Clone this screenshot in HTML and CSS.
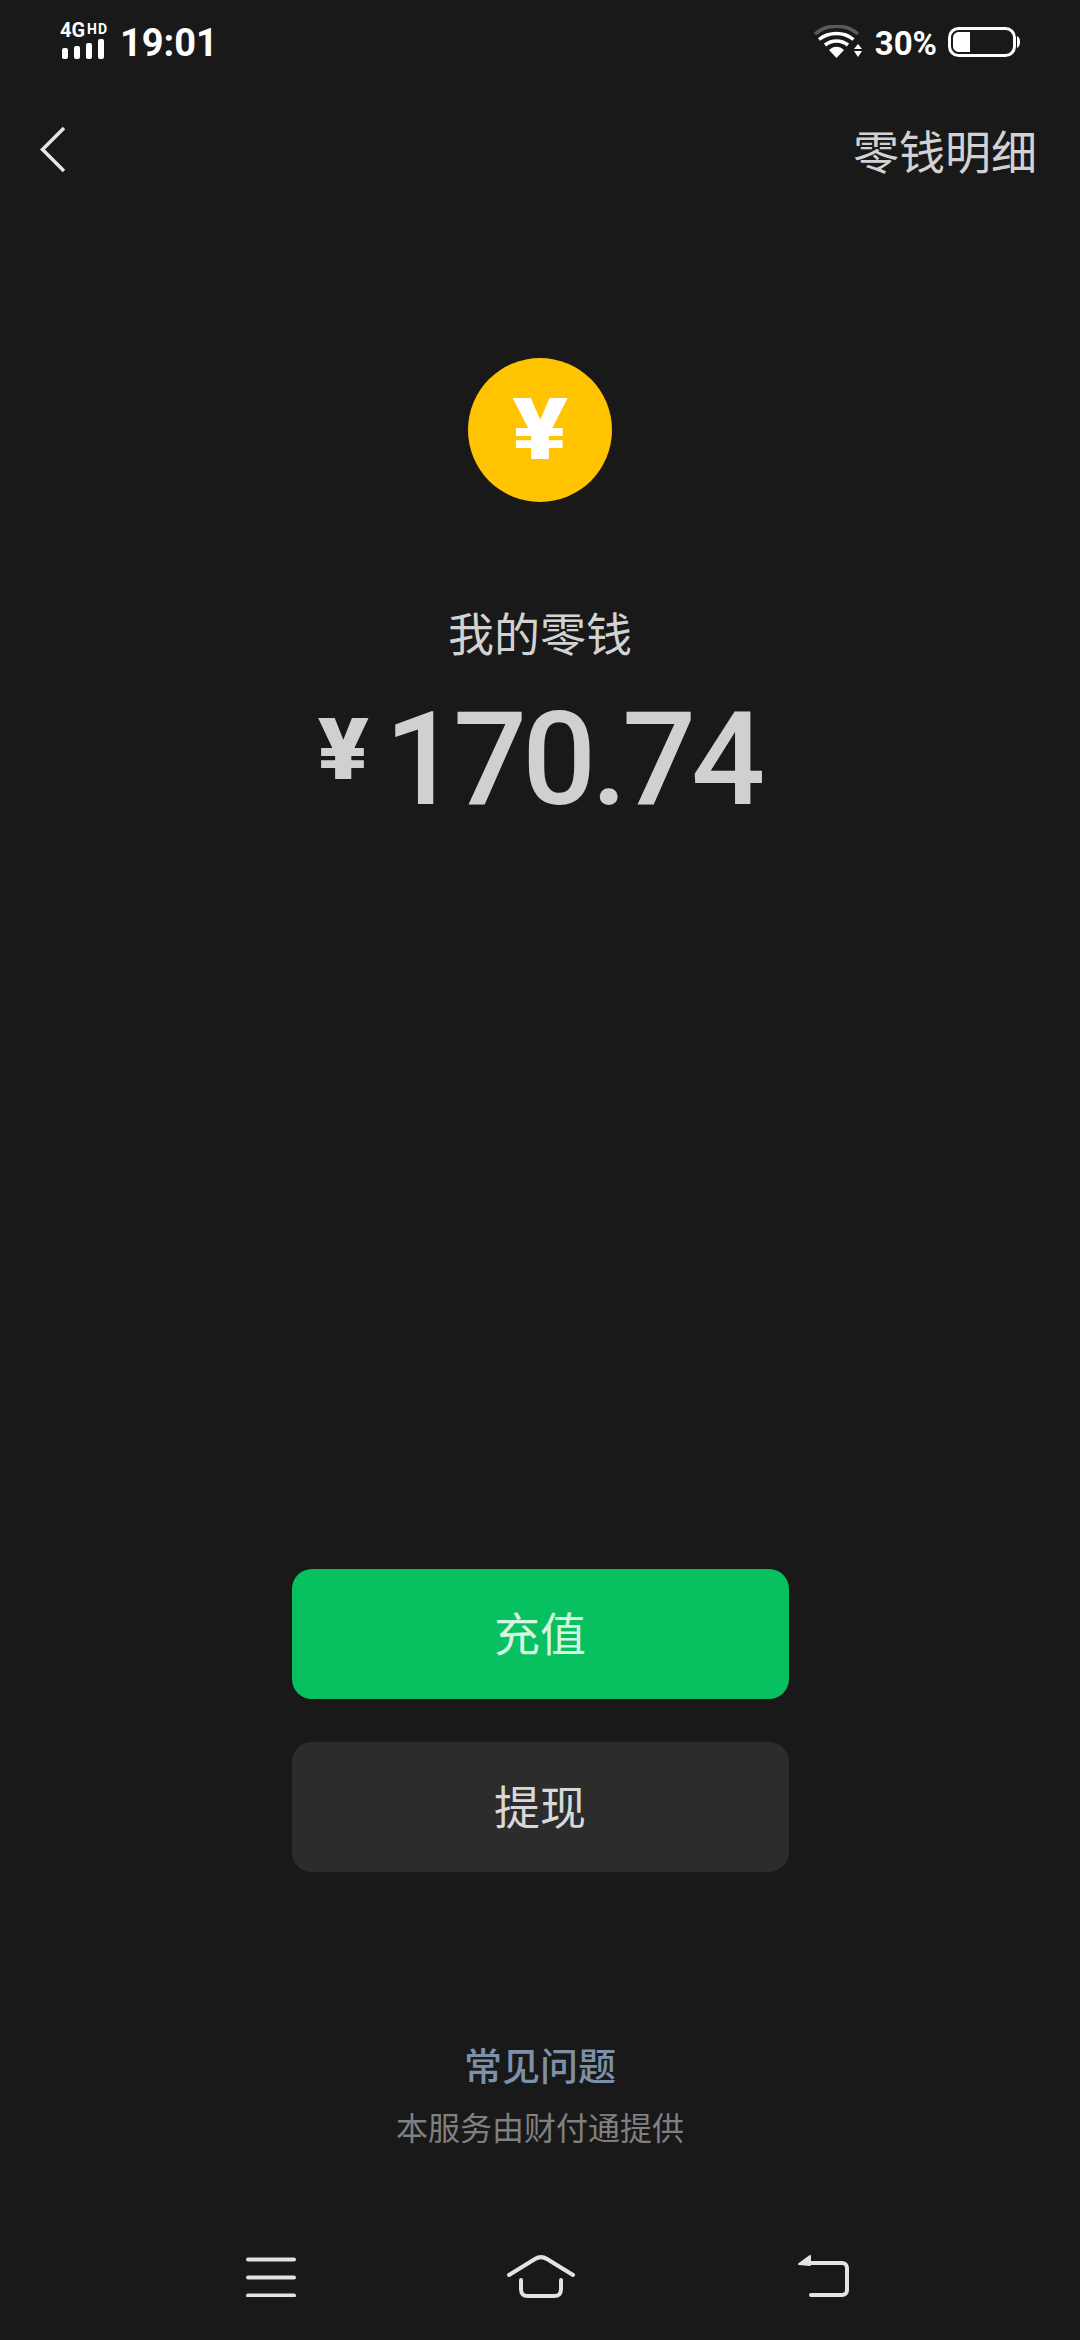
FILE: index.html
```html
<!DOCTYPE html>
<html lang="zh-CN">
<head>
    <meta charset="UTF-8">
    <meta name="viewport" content="width=device-width, initial-scale=1.0">
    <title>我的零钱</title>
    <link rel="stylesheet" href="styles.css">
</head>
<body>
    <div class="page">
        <div class="status-bar">
            <div class="status-left">
                <div class="network">
                    <div class="network-type"><span class="net-4g">4G</span><span class="net-hd">HD</span></div>
                    <div class="signal">
                        <i class="bar bar-1"></i>
                        <i class="bar bar-2"></i>
                        <i class="bar bar-3"></i>
                        <i class="bar bar-4"></i>
                    </div>
                </div>
                <span class="clock">19:01</span>
            </div>
            <div class="status-right">
                <svg class="wifi" width="49" height="34" viewBox="0 0 49 34" fill="none">
                    <path d="M2 9C14 -1.5 33 -1.5 45 9" stroke="#5a5a5a" stroke-width="3.5"/>
                    <path d="M6 14.500C16 6.500 31 6.500 40.500 14.500" stroke="#fff" stroke-width="3.500"/>
                    <path d="M12 20C19 14.500 28 14.500 35 20" stroke="#fff" stroke-width="3.500"/>
                    <path d="M16 25C20.500 20.500 26.500 20.500 31 25L23.500 33Z" fill="#fff"/>
                    <path d="M45 19L49 24H41ZM41 26H49L45 32Z" fill="#fff"/>
                </svg>
                <span class="battery-text">30%</span>
                <svg class="battery" width="72" height="30" viewBox="0 0 72 30" fill="none">
                    <rect x="1.500" y="1.500" width="65" height="27" rx="9" stroke="#fff" stroke-width="3"/>
                    <path d="M5 11C5 7.500 7.500 5 11 5H22V25H11C7.500 25 5 22.500 5 19Z" fill="#fff"/>
                    <path d="M69 9C71 10 72 12 72 15C72 18 71 20 69 21Z" fill="#fff"/>
                </svg>
            </div>
        </div>

        <div class="nav">
            <svg class="back" width="26" height="48" viewBox="0 0 26 48" fill="none">
                <path d="M24 2L2.500 23.500L24 45" stroke="#e6e6e6" stroke-width="3.500"/>
            </svg>
            <span class="nav-link">零钱明细</span>
        </div>

        <div class="wallet">
            <div class="coin"><span class="coin-sign">¥</span></div>
            <div class="wallet-label">我的零钱</div>
            <div class="amount"><span class="amount-sign">¥</span><span class="amount-value">170.74</span></div>
        </div>

        <div class="actions">
            <div class="btn btn-primary">充值</div>
            <div class="btn btn-dark">提现</div>
        </div>

        <div class="help">
            <div class="help-link">常见问题</div>
            <div class="help-note">本服务由财付通提供</div>
        </div>

        <div class="sys-nav">
            <svg width="50" height="40" viewBox="0 0 50 40" fill="none" stroke="#e3e3e3" stroke-width="4" stroke-linecap="round">
                <path d="M2 2.500H48M2 20.500H48M2 38.500H48"/>
            </svg>
            <svg class="sys-home" width="68" height="44" viewBox="0 0 68 44" fill="none" stroke="#e3e3e3" stroke-width="4" stroke-linecap="round" stroke-linejoin="round">
                <path d="M2 20L28 4C32 1.500 36 1.500 40 4L66 20"/>
                <path d="M14 25V34C14 39 16 41 21 41H47C52 41 54 39 54 34V25"/>
            </svg>
            <svg width="52" height="44" viewBox="0 0 52 44" fill="none" stroke="#e3e3e3" stroke-width="4" stroke-linecap="round" stroke-linejoin="round">
                <path d="M10 8H45C48 8 50 10 50 13V35C50 38 48 40 45 40H14"/>
                <path d="M2 9L13 1V10Z" fill="#e3e3e3" stroke-width="2"/>
            </svg>
        </div>
    </div>
</body>
</html>
```

FILE: styles.css
```css
* {
  box-sizing: border-box;
}

body {
  margin: 0;
  background-color: #191919;
  font-family: Roboto, "Noto Sans CJK SC", sans-serif;
}

.page {
  display: flex;
  flex-direction: column;
  width: 1080px;
  height: 2340px;
  overflow: hidden;
}

/* status bar */
.status-bar {
  display: flex;
  justify-content: space-between;
  align-items: center;
  height: 86px;
  padding: 0 60px 0 60px;
  color: #fff;
}

.status-left,
.status-right {
  display: flex;
  align-items: center;
}

.network {
  display: flex;
  flex-direction: column;
  width: 48px;
  margin-top: -4px;
}

.network-type {
  display: flex;
  align-items: flex-start;
  height: 15px;
  font-weight: 700;
  line-height: 15px;
}

.net-4g {
  font-size: 20px;
}

.net-hd {
  margin-left: 2px;
  font-size: 14px;
  line-height: 12px;
  letter-spacing: 1px;
}

.signal {
  display: flex;
  align-items: flex-end;
  gap: 6px;
  height: 20px;
  margin-top: 1px;
  padding-left: 2px;
}

.bar {
  width: 6px;
  border-radius: 2px;
  background-color: #fff;
}

.bar-1 { height: 11px; }
.bar-2 { height: 13px; }
.bar-3 { height: 16px; }
.bar-4 { height: 20px; }

.clock {
  margin-left: 12px;
  font-size: 38px;
  font-weight: 700;
}

.wifi,
.battery {
  margin-top: -2px;
}

.battery-text {
  margin-left: 13px;
  font-size: 33px;
  font-weight: 700;
}

.battery {
  margin-left: 11px;
}

/* top nav */
.nav {
  display: flex;
  justify-content: space-between;
  align-items: center;
  height: 128px;
  padding: 0 43px 0 40px;
}

.nav-link {
  margin-top: -3px;
  font-size: 46px;
  color: #d2d2d2;
}

/* balance */
.wallet {
  display: flex;
  flex-direction: column;
  align-items: center;
  margin-top: 144px;
}

.coin {
  width: 144px;
  height: 144px;
  border-radius: 50%;
  background-color: #ffc300;
  color: #fff;
  font-size: 86px;
  font-weight: 900;
  line-height: 144px;
  text-align: center;
}

.coin-sign {
  display: inline-block;
  transform: scaleX(1.2);
}

.wallet-label {
  margin-top: 103px;
  font-size: 46px;
  line-height: 60px;
  color: #d2d2d2;
}

.amount {
  display: flex;
  align-items: flex-start;
  margin-top: 25px;
  color: #d0d0d0;
  font-weight: 500;
}

.amount-sign {
  margin-top: 5px;
  font-size: 86px;
  font-weight: 900;
  line-height: 110px;
  transform: scaleX(1.1);
}

.amount-value {
  margin-left: 18px;
  font-size: 130px;
  line-height: 140px;
  letter-spacing: -5px;
}

/* buttons */
.actions {
  display: flex;
  flex-direction: column;
  align-items: center;
  gap: 43px;
  margin-top: 739px;
}

.btn {
  width: 497px;
  height: 130px;
  border-radius: 20px;
  font-size: 46px;
  line-height: 133px;
  text-align: center;
}

.btn-primary {
  background-color: #07c160;
  color: #d6f5e3;
}

.btn-dark {
  background-color: #2c2c2c;
  color: #d8d8d8;
}

/* footer */
.help {
  margin-top: 171px;
  text-align: center;
}

.help-link {
  font-size: 38px;
  font-weight: 500;
  line-height: 48px;
  color: #7d90a9;
}

.help-note {
  margin-top: 16px;
  font-size: 32px;
  line-height: 44px;
  color: #808080;
}

/* system nav */
.sys-nav {
  display: flex;
  justify-content: space-between;
  align-items: center;
  width: 603px;
  margin: 104px 0 0 246px;
}

.sys-home {
  margin-left: -11px;
}
```
